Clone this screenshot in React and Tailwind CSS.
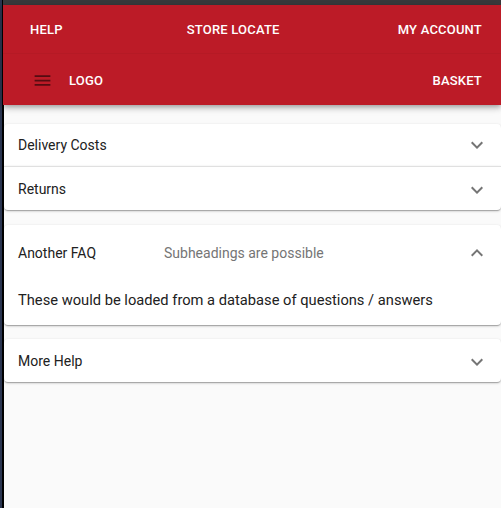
import React, { useState } from 'react';

const font = { fontFamily: 'Roboto, "Liberation Sans", sans-serif' };

function Chevron({ up }) {
  return (
    <svg viewBox="0 0 24 24" className="h-6 w-6 text-[#757575]" fill="currentColor">
      {up ? (
        <path d="M7.41 15.41 12 10.83l4.59 4.58L18 14l-6-6-6 6z" />
      ) : (
        <path d="M7.41 8.59 12 13.17l4.59-4.58L18 10l-6 6-6-6 1.41-1.41z" />
      )}
    </svg>
  );
}

const faqs = [
  { title: 'Delivery Costs', group: 0 },
  { title: 'Returns', group: 0 },
  {
    title: 'Another FAQ',
    sub: 'Subheadings are possible',
    body: 'These would be loaded from a database of questions / answers',
    group: 1,
  },
  { title: 'More Help', group: 2 },
];

function Panel({ faq, open, onToggle, first, last, short }) {
  return (
    <div
      className={
        'bg-white shadow-[0_1px_3px_0_rgba(0,0,0,0.2),0_1px_1px_0_rgba(0,0,0,0.14),0_2px_1px_-1px_rgba(0,0,0,0.12)] ' +
        (first ? 'rounded-t ' : '') +
        (last ? 'rounded-b ' : '') +
        (!first ? 'border-t border-[#e0e0e0]' : '')
      }
    >
      <button
        onClick={onToggle}
        className={
          'flex w-full items-center pl-[14px] pr-[12px] text-left text-[14px] text-[#212121] ' +
          (open ? 'h-[56px]' : short ? 'h-[42px]' : 'h-[43px] pt-[2px]')
        }
      >
        <span className="w-[146px] shrink-0">{faq.title}</span>
        {faq.sub && <span className="text-[#757575]">{faq.sub}</span>}
        <span className="ml-auto">
          <Chevron up={open} />
        </span>
      </button>
      {open && faq.body && (
        <div className="pl-[14px] pr-4 pt-[9px] pb-[15px] text-[14.7px] leading-5 text-[#212121]">{faq.body}</div>
      )}
    </div>
  );
}

export default function App() {
  const [open, setOpen] = useState('Another FAQ');

  const toggle = (t) => setOpen(open === t ? null : t);

  return (
    <div className="flex min-h-[508px] w-[501px] bg-[#fafafa]" style={font}>
      <div className="flex w-[4px] shrink-0">
        <div className="w-[2px] bg-[#2a3550]" />
        <div className="w-[2px] bg-black" />
      </div>
      <div className="flex min-w-0 flex-1 flex-col">
        <div className="-ml-[1px] h-[5px] bg-[#383a3c]" />
        <header className="relative z-10 -ml-[1px] bg-[#bc1b27] text-white shadow-[0_2px_4px_-1px_rgba(0,0,0,0.2),0_4px_5px_0_rgba(0,0,0,0.14),0_1px_10px_0_rgba(0,0,0,0.12)]">
          <nav className="flex h-[49px] items-center justify-between border-b border-[#b51a25] pl-[27px] pr-[19px] pt-[2px] text-[13px] font-medium uppercase tracking-[0.2px]">
            <a href="#">Help</a>
            <a href="#" className="ml-[6px]">Store Locate</a>
            <a href="#">My Account</a>
          </nav>
          <div className="flex h-[51px] items-center pl-[27px] pr-[19px] pt-[2px] text-[13px] font-medium uppercase tracking-[0.2px]">
            <button className="ml-[2px] text-black/55">
              <svg viewBox="0 0 24 24" className="h-[21px] w-[21px]" fill="currentColor">
                <path d="M3 18h18v-2H3v2zm0-5h18v-2H3v2zm0-7v2h18V6H3z" />
              </svg>
            </button>
            <span className="ml-[16px]">Logo</span>
            <a href="#" className="ml-auto">Basket</a>
          </div>
        </header>
        <main className="flex flex-col pt-[19px]">
          <div>
            {faqs.filter((f) => f.group === 0).map((f, i, arr) => (
              <Panel
                key={f.title}
                faq={f}
                open={open === f.title}
                onToggle={() => toggle(f.title)}
                first={i === 0}
                last={i === arr.length - 1}
                short={i === 0}
              />
            ))}
          </div>
          <div className="mt-[15px]">
            <Panel faq={faqs[2]} open={open === faqs[2].title} onToggle={() => toggle(faqs[2].title)} first last />
          </div>
          <div className="mt-[14px]">
            <Panel faq={faqs[3]} open={open === faqs[3].title} onToggle={() => toggle(faqs[3].title)} first last />
          </div>
        </main>
      </div>
    </div>
  );
}
